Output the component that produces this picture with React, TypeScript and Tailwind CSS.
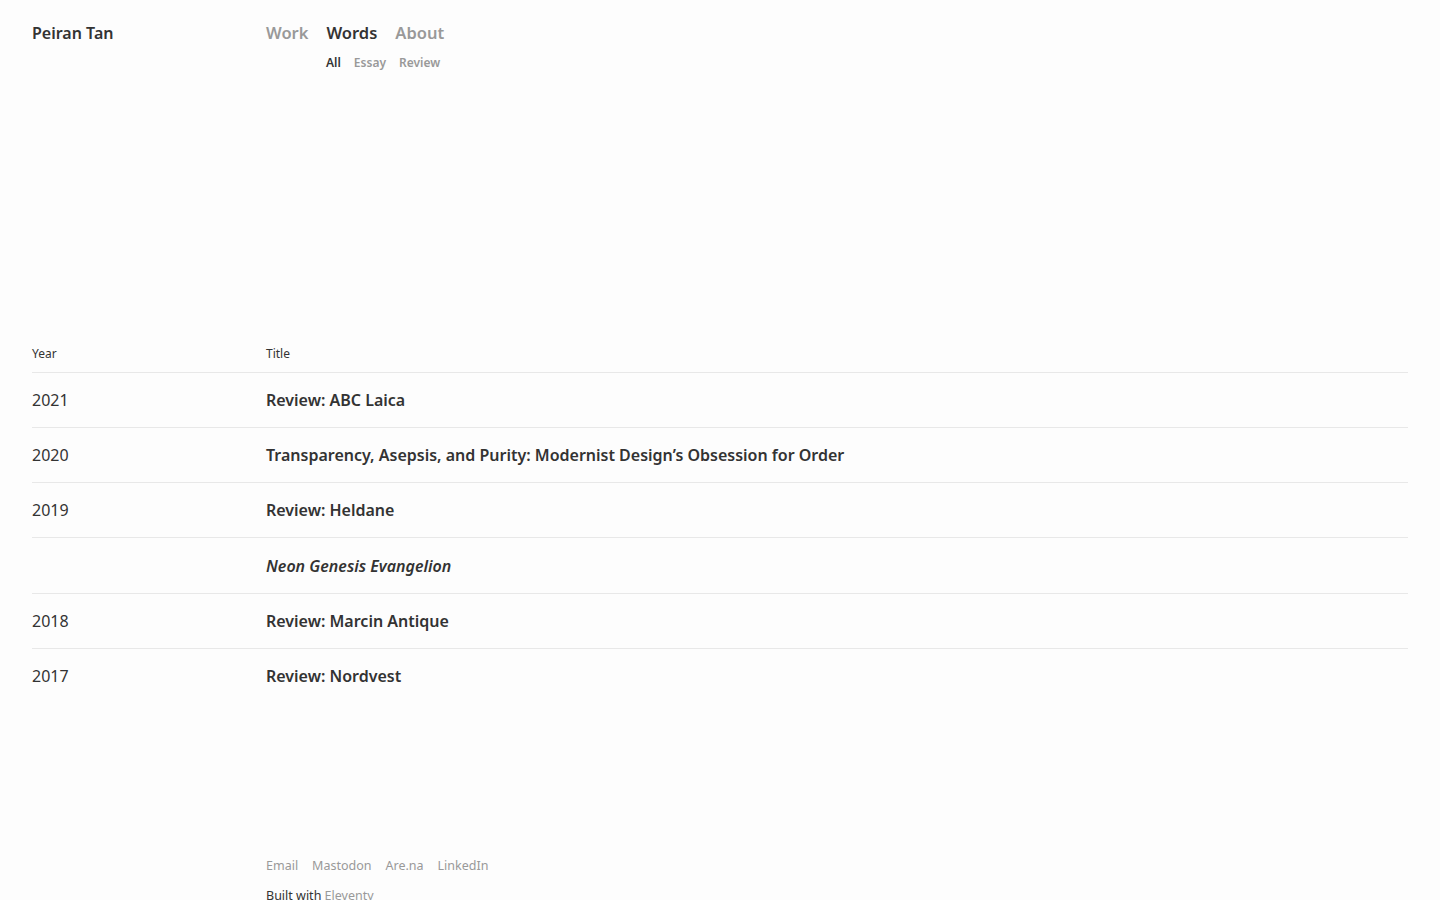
const rows = [
  { year: "2021", title: "Review: ABC Laica" },
  { year: "2020", title: "Transparency, Asepsis, and Purity: Modernist Design’s Obsession for Order" },
  { year: "2019", title: "Review: Heldane" },
  { year: "", title: "Neon Genesis Evangelion", italic: true },
  { year: "2018", title: "Review: Marcin Antique" },
  { year: "2017", title: "Review: Nordvest" },
];

export default function App() {
  return (
    <div
      className="min-h-screen bg-[#fdfdfd] text-[#333] px-8"
      style={{ fontFamily: '"Noto Sans", "Open Sans", sans-serif' }}
    >
      {/* Header */}
      <header className="flex pt-[21px]">
        <div className="w-[234px] text-[16px] font-semibold leading-6">Peiran Tan</div>
        <nav>
          <div className="flex gap-[18px] text-[16.5px] font-semibold leading-6">
            <a className="text-[#999]">Work</a>
            <a className="text-[#333]">Words</a>
            <a className="text-[#999]">About</a>
          </div>
          <div className="flex gap-[13px] pl-[60px] mt-[10px] text-[12px] font-semibold leading-4">
            <a className="text-[#333]">All</a>
            <a className="text-[#999]">Essay</a>
            <a className="text-[#999]">Review</a>
          </div>
        </nav>
      </header>

      {/* Table */}
      <table className="w-full mt-[275px] border-collapse">
        <thead>
          <tr className="border-b border-[#e8e8e8] text-left text-[12px] font-normal">
            <th className="w-[234px] pb-[10px] font-normal leading-4">Year</th>
            <th className="pb-[10px] font-normal leading-4">Title</th>
          </tr>
        </thead>
        <tbody>
          {rows.map((r, i) => (
            <tr key={i} className={i < rows.length - 1 ? "border-b border-[#e8e8e8]" : ""}>
              <td className={`${r.italic ? "h-[56px]" : "h-[55px]"} text-[16px] leading-6 align-middle`}>
                {r.year}
              </td>
              <td
                className={`text-[16px] font-semibold leading-6 align-middle ${r.italic ? "italic" : ""}`}
              >
                {r.title}
              </td>
            </tr>
          ))}
        </tbody>
      </table>

      {/* Footer */}
      <footer className="pl-[234px] mt-[152px] pb-6">
        <div className="flex gap-[14px] text-[12.5px] text-[#999] leading-5">
          <a>Email</a>
          <a>Mastodon</a>
          <a>Are.na</a>
          <a>LinkedIn</a>
        </div>
        <div className="mt-[10px] text-[12.5px] leading-5">
          Built with <a className="text-[#999]">Eleventy</a>
        </div>
      </footer>
    </div>
  );
}
